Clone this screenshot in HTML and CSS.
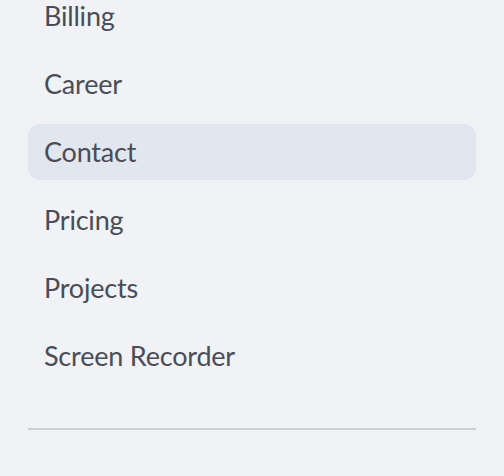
FILE: index.html
```html
<!DOCTYPE html>
<html>
<head>
<meta charset="utf-8">
<link rel="stylesheet" href="styles.css">
</head>
<body>
<nav class="sidebar">
  <ul class="nav">
    <li class="nav-item">Billing</li>
    <li class="nav-item">Career</li>
    <li class="nav-item active">Contact</li>
    <li class="nav-item">Pricing</li>
    <li class="nav-item">Projects</li>
    <li class="nav-item">Screen Recorder</li>
  </ul>
  <hr class="divider">
</nav>
</body>
</html>
```

FILE: styles.css
```css
html, body {
  margin: 0;
  padding: 0;
  background: #f0f2f6;
}
body {
  font-family: "Lato", "Noto Sans", sans-serif;
  color: #4a4c56;
}
.sidebar {
  padding: 0 28px;
}
.nav {
  list-style: none;
  margin: -12px 0 0 0;
  padding: 0;
  display: flex;
  flex-direction: column;
  gap: 12px;
}
.nav-item {
  box-sizing: border-box;
  height: 56px;
  display: flex;
  align-items: center;
  padding: 0 0 2px 16px;
  border-radius: 12px;
  font-size: 27px;
  letter-spacing: -0.2px;
}
.nav-item.active {
  background: #e2e6ee;
}
.divider {
  margin: 44px 0 0 0;
  border: none;
  height: 2px;
  background: #cdcfd4;
}
```
